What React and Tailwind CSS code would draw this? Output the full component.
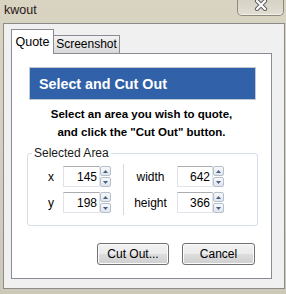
import React from "react";

function Spinner() {
  return (
    <div className="w-[11px] h-[21px] flex flex-col gap-px">
      <div className="flex-1 border border-[#b6c0cc] rounded-[2px] bg-[linear-gradient(to_bottom,#f7f9fb,#dfe5ec)] flex items-center justify-center">
        <svg width="5" height="3" viewBox="0 0 5 3"><path d="M0 3 L2.5 0 L5 3 Z" fill="#4a5f82" /></svg>
      </div>
      <div className="flex-1 border border-[#b6c0cc] rounded-[2px] bg-[linear-gradient(to_bottom,#f7f9fb,#dfe5ec)] flex items-center justify-center">
        <svg width="5" height="3" viewBox="0 0 5 3"><path d="M0 0 L2.5 3 L5 0 Z" fill="#4a5f82" /></svg>
      </div>
    </div>
  );
}

function NumField({ value, w }) {
  return (
    <div className="flex items-stretch h-[21px]">
      <div
        className={
          (w === 37 ? "w-[37px] " : "w-[36px] ") +
          "border border-[#e2e3ea] border-t-[#abadb3] bg-white flex items-center justify-end pr-[2px] leading-[14px]"
        }
      >
        {value}
      </div>
      <Spinner />
    </div>
  );
}

export default function App() {
  return (
    <div className="w-[286px] h-[294px] overflow-hidden flex flex-col bg-[linear-gradient(to_bottom,#d9d4c2,#cdc9b9)] font-['Liberation_Sans',Arial,sans-serif] text-[12px] text-black">
      {/* title bar */}
      <div className="h-[23px] shrink-0 flex items-start">
        <div className="ml-[4px] mt-[3px] text-[12.5px] leading-[15px] text-[#2a1616]">kwout</div>
        <div className="ml-auto mr-[2px] w-[47px] h-[16px] border border-t-0 border-[#8d8a7f] rounded-b-[5px] bg-[linear-gradient(to_bottom,#d6d2c4,#e2ded2)] shadow-[inset_0_-1px_0_#f3f1ea] flex justify-center items-start">
          <svg width="14" height="11" viewBox="0 0 14 11" className="ml-[1px]">
            <path d="M3 1 L11 9 M11 1 L3 9" stroke="#5f6066" strokeWidth="4.2" strokeLinecap="round" />
            <path d="M3 1 L11 9 M11 1 L3 9" stroke="#ffffff" strokeWidth="2.2" strokeLinecap="round" />
          </svg>
        </div>
      </div>

      {/* client area */}
      <div className="ml-[3px] w-[282px] h-[266px] border border-[#8b8b8b] bg-[#f0f0f0] pt-[5px] pl-[7px]">
        {/* tabs */}
        <div className="flex items-end">
          <div className="relative z-10 -mb-px w-[43px] h-[25px] border border-b-0 border-[#898c95] bg-white pt-[5px] text-center leading-[14px] text-[12.5px]">
            Quote
          </div>
          <div className="w-[66px] h-[18px] border border-l-0 border-b-0 border-[#898c95] bg-[linear-gradient(to_bottom,#f2f2f2,#d9d9d9)] pt-[1px] text-center leading-[14px]">
            Screenshot
          </div>
        </div>

        {/* panel */}
        <div className="w-[261px] border border-[#898c95] bg-white flex flex-col">
          <div className="mt-[13px] ml-[17px] w-[227px] h-[33px] border border-[#c3c8d0] bg-[#3161a9] flex items-center pl-[9px] text-white font-bold text-[14.3px] leading-[16px]">
            Select and Cut Out
          </div>

          <div className="mt-[5px] text-center font-bold text-[11.5px] leading-[18px]">
            Select an area you wish to quote,
            <br />
            and click the "Cut Out" button.
          </div>

          <fieldset className="mt-[5px] ml-[15px] w-[231px] border border-[#d5dfe5] rounded-[3px] p-0">
            <legend className="ml-[4px] px-[2px] leading-[14px] text-[#1a1a1a]">Selected Area</legend>
            <div className="flex items-stretch pl-[11px] pt-[6px] pb-[12px]">
              <div className="flex flex-col gap-[5px]">
                <div className="flex items-center">
                  <div className="w-[24px] text-center leading-[14px]">x</div>
                  <NumField value="145" w={37} />
                </div>
                <div className="flex items-center">
                  <div className="w-[24px] text-center leading-[14px]">y</div>
                  <NumField value="198" w={37} />
                </div>
              </div>
              <div className="ml-[12px] -my-[2px] w-px bg-[#d9d9d9]" />
              <div className="flex flex-col gap-[5px]">
                <div className="flex items-center">
                  <div className="w-[53px] text-center leading-[14px]">width</div>
                  <NumField value="642" w={36} />
                </div>
                <div className="flex items-center">
                  <div className="w-[53px] text-center leading-[14px]">height</div>
                  <NumField value="366" w={36} />
                </div>
              </div>
            </div>
          </fieldset>

          <div className="mt-[17px] mb-[13px] pr-[16px] flex justify-end gap-[13px]">
            <button className="w-[72px] h-[22px] border border-[#707070] rounded-[3px] bg-[linear-gradient(to_bottom,#f2f2f2_0%,#ebebeb_50%,#dddddd_50%,#cfcfcf_100%)] shadow-[inset_0_0_0_1px_#fbfbfb] text-[12px] leading-[14px]">
              Cut Out...
            </button>
            <button className="w-[73px] h-[22px] border border-[#707070] rounded-[3px] bg-[linear-gradient(to_bottom,#f2f2f2_0%,#ebebeb_50%,#dddddd_50%,#cfcfcf_100%)] shadow-[inset_0_0_0_1px_#fbfbfb] text-[12px] leading-[14px]">
              Cancel
            </button>
          </div>
        </div>
      </div>
    </div>
  );
}
